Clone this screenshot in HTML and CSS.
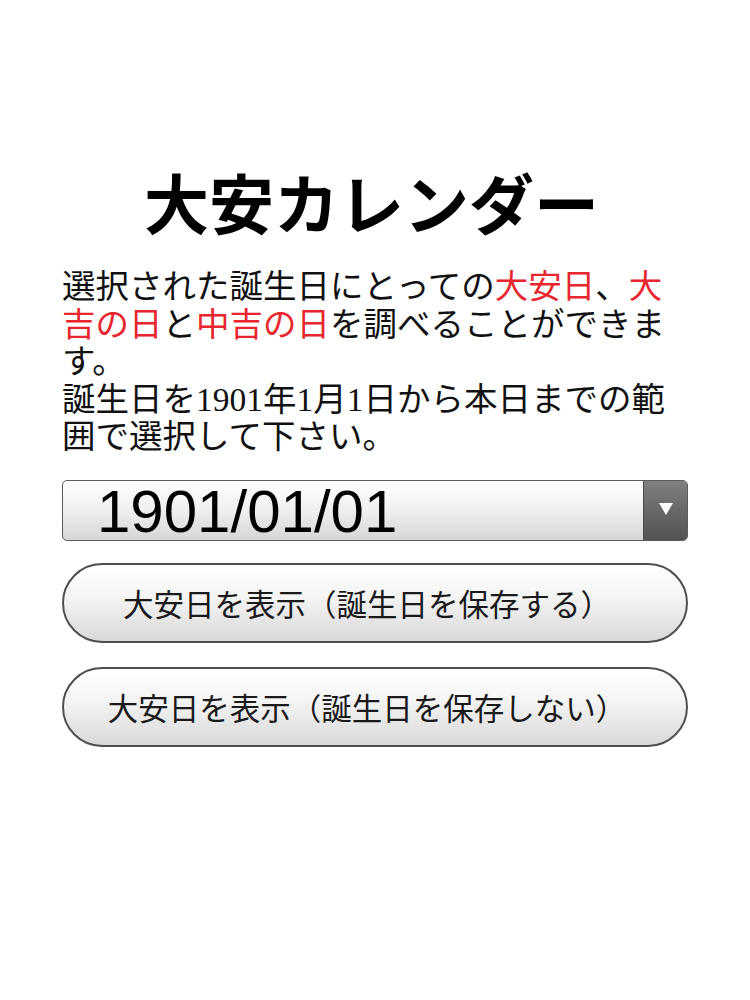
FILE: index.html
```html
<!DOCTYPE html>
<html lang="ja">
<head>
<meta charset="utf-8">
<title>大安カレンダー</title>
<link rel="stylesheet" href="styles.css">
</head>
<body>
<main class="page">
  <h1 class="title">大安カレンダー</h1>
  <p class="lead">選択された誕生日にとっての<span class="red">大安日</span>、<span class="red">大吉の日</span>と<span class="red">中吉の日</span>を調べることができます。<br>誕生日を1901年1月1日から本日までの範囲で選択して下さい。</p>
  <div class="select">
    <span class="select-value">1901/01/01</span>
    <span class="select-arrow"><svg width="14" height="12" viewBox="0 0 14 12"><path d="M0 0 H14 L7 12 Z" fill="#fff"/></svg></span>
  </div>
  <button class="btn btn-first" type="button">大安日を表示（誕生日を保存する）</button>
  <button class="btn btn-second" type="button">大安日を表示（誕生日を保存しない）</button>
</main>
</body>
</html>
```
FILE: styles.css
```css
html, body {
  margin: 0;
  padding: 0;
  background: #fff;
}

.page {
  width: 626px;
  padding: 169px 62px 0 62px;
  display: flex;
  flex-direction: column;
}

.title {
  margin: 0;
  font-family: "Noto Sans CJK JP", sans-serif;
  font-weight: 700;
  font-size: 65px;
  line-height: 65px;
  text-align: center;
  padding-right: 7px;
  color: #000;
}

.lead {
  margin: 34px 0 0 0;
  font-family: "Liberation Serif", "Noto Sans CJK JP", serif;
  font-size: 33.5px;
  line-height: 37.5px;
  color: #111;
}

.red {
  color: #e8262d;
}

.select {
  margin-top: 24px;
  height: 59px;
  border: 1px solid #5c5c5c;
  border-radius: 5px;
  background: linear-gradient(#ffffff 0%, #f1f1f1 45%, #d6d6d6 100%);
  display: flex;
  align-items: stretch;
}

.select-value {
  flex: 1;
  padding: 1px 0 0 34px;
  font-family: "Liberation Sans", Arial, sans-serif;
  font-size: 60px;
  line-height: 59px;
  color: #000;
}

.select-arrow {
  width: 43px;
  border-left: 1px solid #4a4a4a;
  border-radius: 0 4px 4px 0;
  background: linear-gradient(#808080 0%, #686868 50%, #535353 100%);
  display: flex;
  align-items: center;
  justify-content: center;
}

.select-arrow svg {
  display: block;
  margin-top: -3px;
}

.btn {
  display: block;
  width: 100%;
  height: 80px;
  margin: 0;
  padding: 0 16px 0 0;
  border: 2px solid #4e4e4e;
  border-radius: 40px;
  background: linear-gradient(#ffffff 0%, #f5f5f5 40%, #d9d9d9 100%);
  font-family: "Noto Sans CJK JP", sans-serif;
  font-size: 30.5px;
  line-height: 40px;
  color: #1a1a1a;
  text-align: center;
}

.btn-first {
  margin-top: 22px;
}

.btn-second {
  margin-top: 24px;
}
```
